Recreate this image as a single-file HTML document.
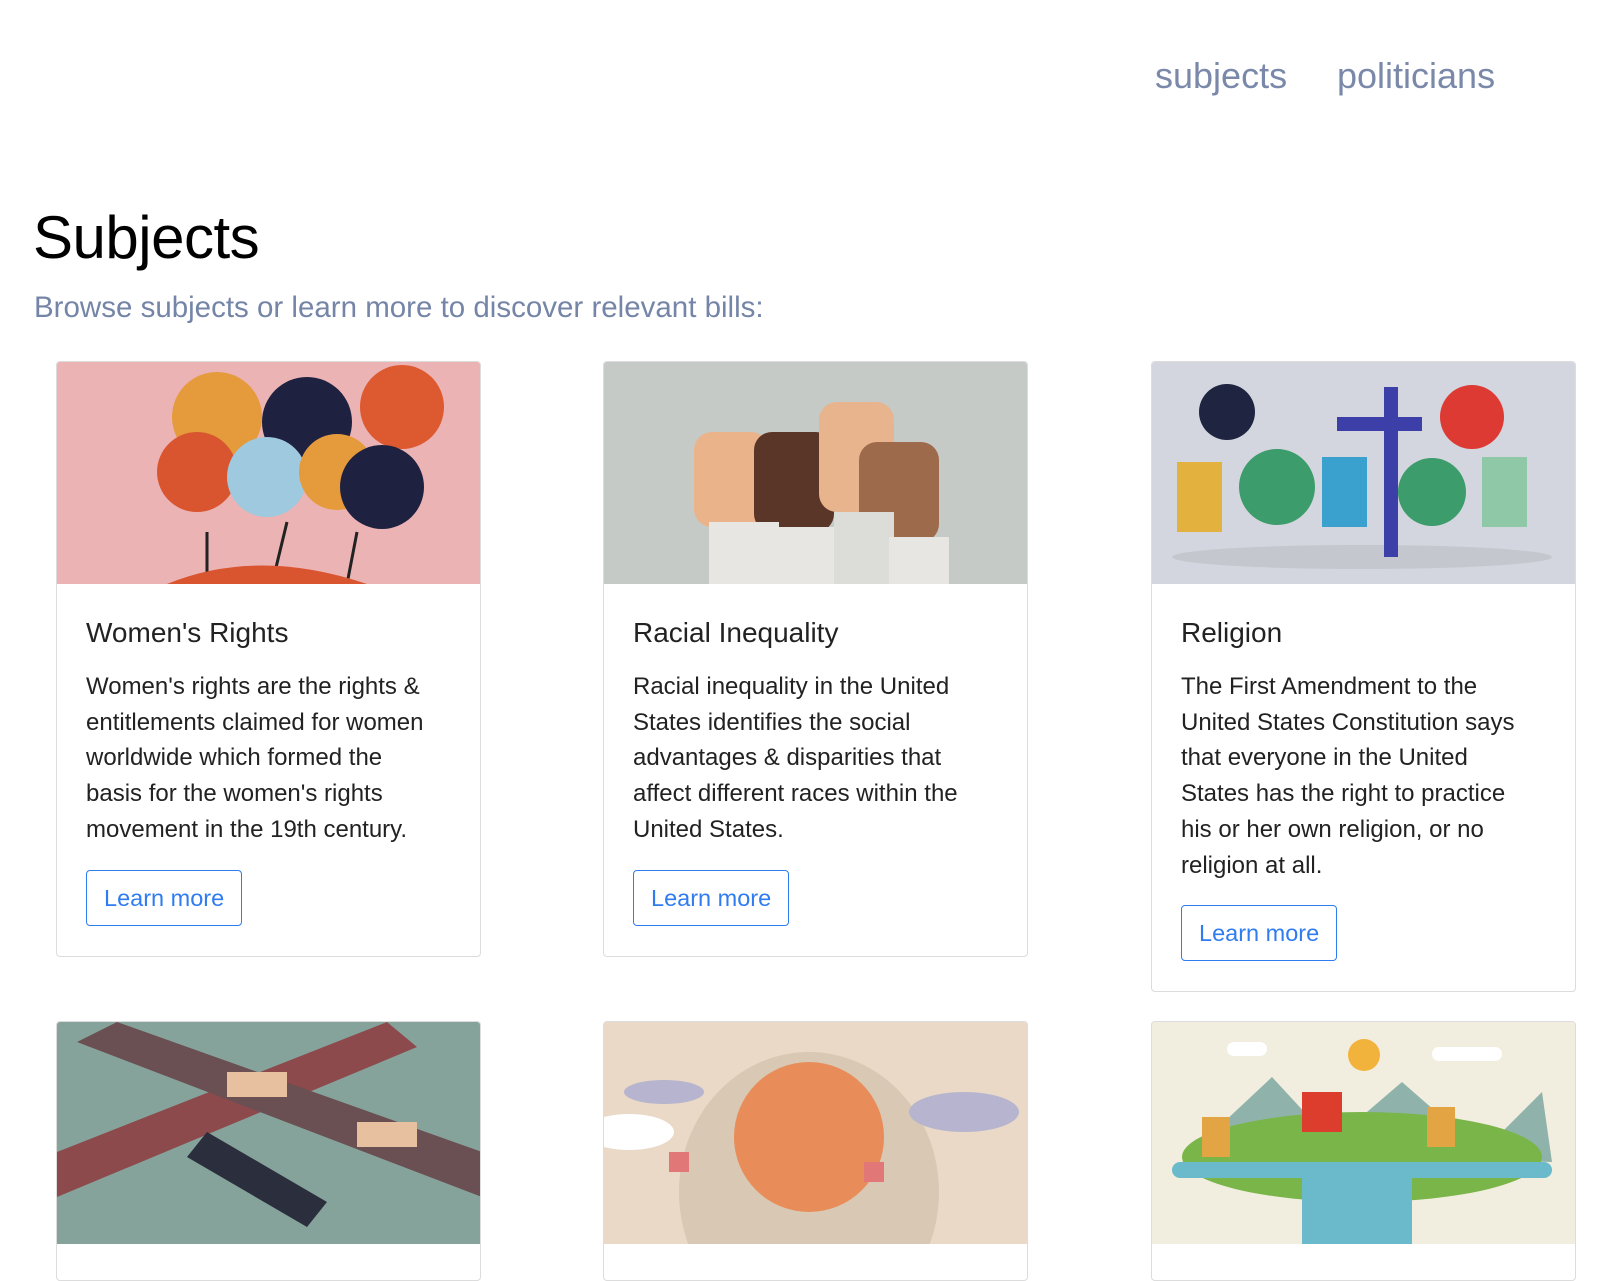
<!DOCTYPE html>
<html><head><meta charset="utf-8"><style>
*{margin:0;padding:0;box-sizing:border-box}
body{width:1600px;height:1191px;overflow:hidden;background:#fff;font-family:"Liberation Sans",sans-serif;position:relative}
.nav{position:absolute;top:55px;font-size:36px;color:#7a89aa}
h1{position:absolute;left:33px;top:203px;font-size:60px;font-weight:normal;color:#000;letter-spacing:-0.5px}
.sub{position:absolute;left:34px;top:291px;font-size:29.5px;color:#7585a7}
.card{position:absolute;width:425px;border:1px solid #dcdcdc;border-radius:4px;overflow:hidden;background:#fff}
.img{height:222px;position:relative;overflow:hidden}
.body{padding:33px 29px 30px}
.t{font-size:28px;color:#222;margin-bottom:20px}
.p{font-size:24px;line-height:35.7px;color:#222;margin-bottom:22px;padding-right:10px}
.btn{display:inline-block;border:1.5px solid #2f7cf0;color:#2f7cf0;border-radius:4px;font-size:23.5px;padding:13px 17px;line-height:28px}
svg{position:absolute;left:0;top:0}
</style></head><body>
<div class="nav" style="left:1155px">subjects</div>
<div class="nav" style="left:1337px">politicians</div>
<h1>Subjects</h1>
<div class="sub">Browse subjects or learn more to discover relevant bills:</div>

<div class="card" style="left:56px;top:361px">
<div class="img" style="background:#ebb3b4"><svg width="425" height="222">
<circle cx="160" cy="55" r="45" fill="#e59a3b"/><circle cx="250" cy="60" r="45" fill="#1f2140"/><circle cx="345" cy="45" r="42" fill="#dd5a30"/>
<circle cx="140" cy="110" r="40" fill="#d8552f"/><circle cx="210" cy="115" r="40" fill="#9ec9de"/><circle cx="280" cy="110" r="38" fill="#e59a3b"/><circle cx="325" cy="125" r="42" fill="#1f2140"/>
<path d="M150 170 L150 222 M230 160 L215 222 M300 170 L290 222" stroke="#222" stroke-width="3"/>
<path d="M110 222 Q200 185 310 222Z" fill="#d8552f"/></svg></div>
<div class="body"><div class="t">Women's Rights</div><div class="p">Women's rights are the rights &amp; entitlements claimed for women worldwide which formed the basis for the women's rights movement in the 19th century.</div><span class="btn">Learn more</span></div></div>

<div class="card" style="left:603px;top:361px">
<div class="img" style="background:#c6cac7"><svg width="425" height="222">
<rect x="90" y="70" width="75" height="95" rx="18" fill="#eab38a"/><rect x="150" y="70" width="80" height="100" rx="18" fill="#5a3628"/><rect x="215" y="40" width="75" height="110" rx="18" fill="#e7b48e"/><rect x="255" y="80" width="80" height="100" rx="18" fill="#9d6a4c"/>
<rect x="105" y="160" width="70" height="62" fill="#e7e6e2"/><rect x="170" y="165" width="65" height="57" fill="#e7e6e2"/><rect x="230" y="150" width="60" height="72" fill="#dcdcd8"/><rect x="285" y="175" width="60" height="47" fill="#e7e6e2"/></svg></div>
<div class="body"><div class="t">Racial Inequality</div><div class="p">Racial inequality in the United States identifies the social advantages &amp; disparities that affect different races within the United States.</div><span class="btn">Learn more</span></div></div>

<div class="card" style="left:1151px;top:361px">
<div class="img" style="background:#d3d6de"><svg width="425" height="222">
<ellipse cx="210" cy="195" rx="190" ry="12" fill="#c5c7cf"/>
<circle cx="75" cy="50" r="28" fill="#1f2440"/><circle cx="320" cy="55" r="32" fill="#dd3a34"/>
<rect x="232" y="25" width="14" height="170" fill="#3d3fa8"/><rect x="185" y="55" width="85" height="14" fill="#3d3fa8"/>
<circle cx="125" cy="125" r="38" fill="#3c9c6b"/><circle cx="280" cy="130" r="34" fill="#3c9c6b"/>
<rect x="25" y="100" width="45" height="70" fill="#e3b13d"/><rect x="330" y="95" width="45" height="70" fill="#8fc8a6"/><rect x="170" y="95" width="45" height="70" fill="#3aa0ce"/></svg></div>
<div class="body"><div class="t">Religion</div><div class="p">The First Amendment to the United States Constitution says that everyone in the United States has the right to practice his or her own religion, or no religion at all.</div><span class="btn">Learn more</span></div></div>

<div class="card" style="left:56px;top:1021px;height:260px">
<div class="img" style="background:#86a39b"><svg width="425" height="222">
<path d="M0 130 L330 0 L360 25 L0 175Z" fill="#8c4a4c"/><path d="M60 0 L425 130 L425 175 L20 20Z" fill="#6a4f53"/>
<path d="M150 110 L270 180 L250 205 L130 135Z" fill="#2b2e3c"/><rect x="170" y="50" width="60" height="25" fill="#e7c0a0"/><rect x="300" y="100" width="60" height="25" fill="#e7c0a0"/></svg></div></div>

<div class="card" style="left:603px;top:1021px;height:260px">
<div class="img" style="background:#ead9c6"><svg width="425" height="222">
<ellipse cx="205" cy="170" rx="130" ry="140" fill="#d9c8b3"/><circle cx="205" cy="115" r="75" fill="#e88c5a"/>
<ellipse cx="60" cy="70" rx="40" ry="12" fill="#b6b4cf"/><ellipse cx="360" cy="90" rx="55" ry="20" fill="#b6b4cf"/><ellipse cx="25" cy="110" rx="45" ry="18" fill="#fff"/>
<rect x="65" y="130" width="20" height="20" fill="#e17777"/><rect x="260" y="140" width="20" height="20" fill="#e17777"/></svg></div></div>

<div class="card" style="left:1151px;top:1021px;height:260px">
<div class="img" style="background:#f2eedf"><svg width="425" height="222">
<circle cx="212" cy="33" r="16" fill="#f2b33d"/><rect x="75" y="20" width="40" height="14" rx="7" fill="#fff"/><rect x="280" y="25" width="70" height="14" rx="7" fill="#fff"/>
<path d="M40 130 L120 55 L180 120 L250 60 L330 130 L390 70 L400 140Z" fill="#8fb3ab"/>
<ellipse cx="210" cy="135" rx="180" ry="45" fill="#7ab54a"/><rect x="150" y="70" width="40" height="40" fill="#dd3d2c"/><rect x="50" y="95" width="28" height="40" fill="#e3a543"/><rect x="275" y="85" width="28" height="40" fill="#e3a543"/>
<rect x="20" y="140" width="380" height="16" rx="8" fill="#6bbacb"/><rect x="150" y="150" width="110" height="72" fill="#6bbacb"/></svg></div></div>
</body></html>
